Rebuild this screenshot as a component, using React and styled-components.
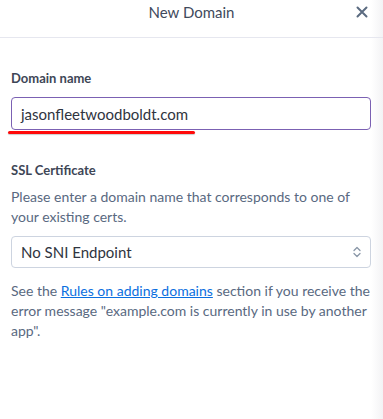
import React from 'react';
import styled, { createGlobalStyle } from 'styled-components';

const GlobalStyle = createGlobalStyle`
  html, body {
    margin: 0;
    padding: 0;
    background: #ffffff;
  }
  body {
    font-family: Lato, "Noto Sans", sans-serif;
  }
`;

const Panel = styled.div`
  width: 383px;
  height: 419px;
  box-sizing: border-box;
  background: linear-gradient(to right, #ffffff 0, #ffffff 371px, #f3f3f5 383px);
  color: #596981;
`;

const Header = styled.header`
  height: 23px;
  padding-bottom: 14px;
  display: flex;
  align-items: center;
  justify-content: center;
  position: relative;
  border-bottom: 1px solid #e6e7ef;
`;

const Title = styled.h2`
  margin: 0;
  font-size: 15px;
  font-weight: 400;
  color: #3f4a5c;
`;

const CloseButton = styled.button`
  position: absolute;
  right: 13px;
  top: 4px;
  border: none;
  background: none;
  padding: 0;
  width: 16px;
  height: 16px;
  display: flex;
  align-items: center;
  justify-content: center;
  cursor: pointer;
`;

const Body = styled.div`
  padding: 32px 12px 0 11px;
  display: flex;
  flex-direction: column;
`;

const Label = styled.label`
  font-size: 13px;
  font-weight: 700;
  color: #3e4656;
  margin-bottom: ${p => p.$gap || 10}px;
`;

const Field = styled.div`
  position: relative;
  margin-bottom: ${p => p.$gap || 0}px;
`;

const Input = styled.div`
  height: 33px;
  box-sizing: border-box;
  border: 1px solid #7b61b3;
  border-radius: 4px;
  display: flex;
  align-items: center;
  padding: 0 9px;
  font-size: 15px;
  color: #2f3440;
`;

const Select = styled(Input)`
  height: 32px;
  border-color: #cdd4e0;
  justify-content: space-between;
  padding-right: 8px;
`;

const Underline = styled.span`
  position: absolute;
  left: -3px;
  top: 34px;
  width: 187px;
  height: 3px;
  border-radius: 2px;
  background: #ff0a0a;
  box-shadow: 0 1px 1px rgba(0, 0, 0, 0.2);
`;

const Text = styled.p`
  margin: 0 0 ${p => p.$gap || 0}px;
  font-size: 14px;
  line-height: 20px;
  color: #596981;
`;

const Link = styled.a`
  color: #0b6fe0;
  text-decoration: underline;
`;

const CloseIcon = () => (
  <svg width="12" height="12" viewBox="0 0 12 12">
    <path d="M1.5 1.5 L10.5 10.5 M10.5 1.5 L1.5 10.5" stroke="#5b6b80" strokeWidth="2" strokeLinecap="round" />
  </svg>
);

const UpDownIcon = () => (
  <svg width="10" height="14" viewBox="0 0 10 14">
    <path d="M2 5.5 L5 2.5 L8 5.5 M2 8.5 L5 11.5 L8 8.5" stroke="#8a97a8" strokeWidth="1.3" fill="none" strokeLinecap="round" strokeLinejoin="round" />
  </svg>
);

export default function App() {
  return (
    <>
      <GlobalStyle />
      <Panel>
        <Header>
          <Title>New Domain</Title>
          <CloseButton aria-label="Close">
            <CloseIcon />
          </CloseButton>
        </Header>
        <Body>
          <Label $gap={11}>Domain name</Label>
          <Field $gap={32}>
            <Input>jasonfleetwoodboldt.com</Input>
            <Underline />
          </Field>
          <Label $gap={9}>SSL Certificate</Label>
          <Text $gap={9}>
            Please enter a domain name that corresponds to one of your existing certs.
          </Text>
          <Field $gap={13}>
            <Select>
              <span>No SNI Endpoint</span>
              <UpDownIcon />
            </Select>
          </Field>
          <Text>
            See the <Link href="#">Rules on adding domains</Link> section if you receive the
            error message "example.com is currently in use by another app".
          </Text>
        </Body>
      </Panel>
    </>
  );
}
